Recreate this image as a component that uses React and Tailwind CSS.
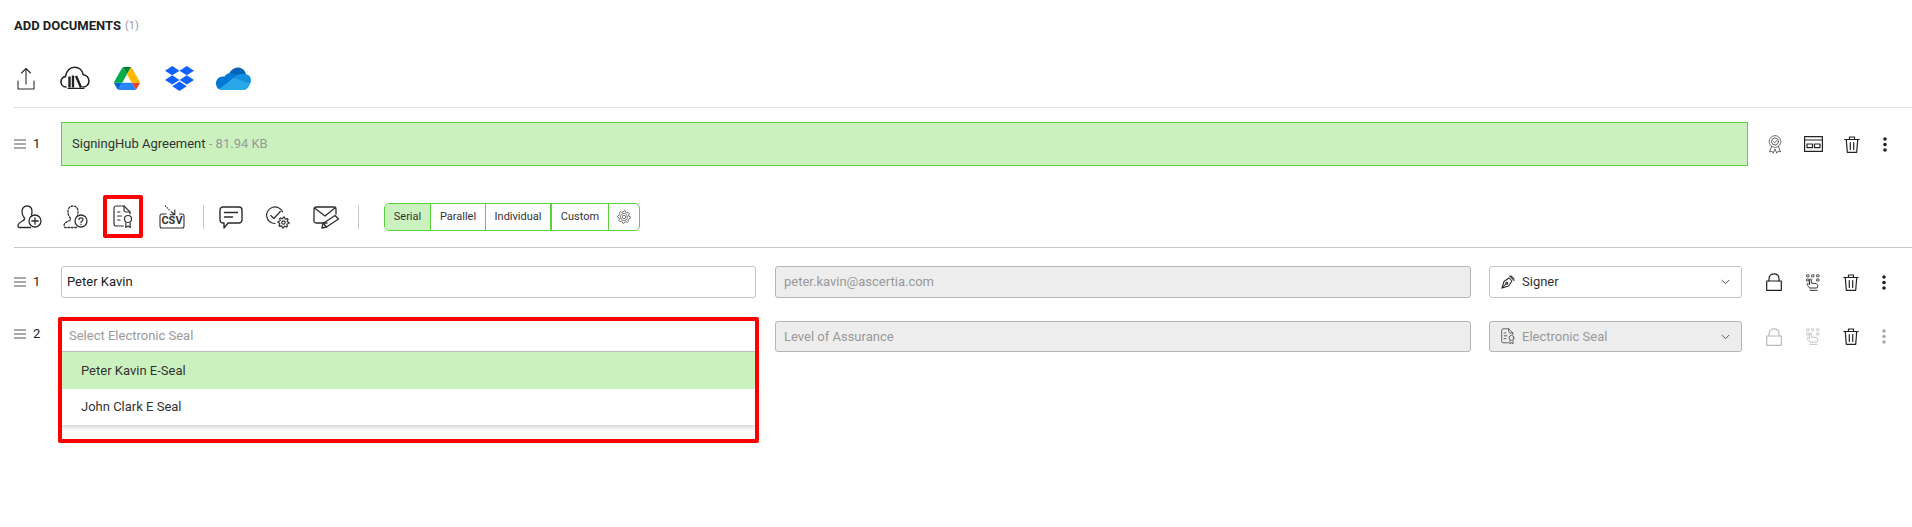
import React from "react";

const S = ({ w = 24, h = 24, vb, className = "", children, sw = 1.3, stroke = "#2b2b2b" }) => (
  <svg width={w} height={h} viewBox={vb || `0 0 ${w} ${h}`} fill="none" stroke={stroke} strokeWidth={sw} strokeLinecap="round" strokeLinejoin="round" className={className}>
    {children}
  </svg>
);

const gearPath = (cx, cy, rOuter, rInner, teeth) => {
  const pts = [];
  const n = teeth * 4;
  for (let i = 0; i < n; i++) {
    const a = (i / n) * Math.PI * 2;
    const r = i % 4 < 2 ? rOuter : rInner;
    pts.push(`${(cx + r * Math.cos(a)).toFixed(2)} ${(cy + r * Math.sin(a)).toFixed(2)}`);
  }
  return "M" + pts.join("L") + "Z";
};

const Handle = () => (
  <svg width="12" height="10" viewBox="0 0 12 10" stroke="#555" strokeWidth="1.1">
    <path d="M0 1h12M0 5h12M0 9h12" />
  </svg>
);

const Upload = () => (
  <S w={18} h={23} sw={1.100}>
    <path d="M9 17V1.500M4.500 6 9 1.500 13.500 6" />
    <path d="M1 14v8h16v-8" />
  </S>
);

const CloudLogo = () => (
  <S w={30} h={24} sw={1.600} stroke="#222">
    <path d="M6 21c-3 0-5-2.300-5-5.300 0-2.600 2-4.800 4.400-5.100C6.300 4.900 10 1.200 14.500 1.200c4.500 0 8 3.200 8.800 7.600 3.200.2 5.700 3 5.700 6.200 0 3.200-2.600 6-6 6" />
    <path d="M9.500 21.500V10.500M13 21.500V9.500" strokeWidth="2.400" strokeLinecap="butt" />
    <path d="M16 10l5 11.500" strokeWidth="2.400" strokeLinecap="butt" />
    <path d="M8 22.400H24" strokeWidth="1.200" />
  </S>
);

const Drive = () => (
  <svg width="26" height="23" viewBox="0 0 87.3 78">
    <path d="m6.6 66.85 3.85 6.65c.8 1.4 1.95 2.5 3.3 3.3l13.75-23.8h-27.5c0 1.55.4 3.1 1.2 4.5z" fill="#0066da" />
    <path d="m43.65 25-13.75-23.8c-1.35.8-2.5 1.9-3.3 3.3l-25.4 44a9.06 9.06 0 0 0 -1.2 4.5h27.5z" fill="#00ac47" />
    <path d="m73.55 76.8c1.35-.8 2.5-1.9 3.3-3.3l1.6-2.75 7.65-13.25c.8-1.4 1.2-2.95 1.2-4.5h-27.502l5.852 11.5z" fill="#ea4335" />
    <path d="m43.65 25 13.75-23.8c-1.35-.8-2.9-1.2-4.5-1.2h-18.5c-1.6 0-3.15.45-4.5 1.2z" fill="#00832d" />
    <path d="m59.8 53h-32.3l-13.75 23.8c1.35.8 2.9 1.2 4.5 1.2h50.8c1.6 0 3.15-.45 4.5-1.2z" fill="#2684fc" />
    <path d="m73.4 26.5-12.7-22c-.8-1.4-1.95-2.5-3.3-3.3l-13.75 23.8 16.15 28h27.45c0-1.55-.4-3.1-1.2-4.5z" fill="#ffba00" />
  </svg>
);

const Dropbox = () => (
  <svg width="29" height="25" viewBox="0 0 29 25" fill="#0f62fe">
    <path d="M7.200 0 14.500 4.700 7.200 9.300 0 4.700z" />
    <path d="M21.800 0 29 4.700 21.800 9.300 14.500 4.700z" />
    <path d="M7.200 9.300 14.500 14 7.200 18.600 0 14z" />
    <path d="M21.800 9.300 29 14 21.800 18.600 14.500 14z" />
    <path d="M7.300 20.200 14.500 15.600 21.700 20.200 14.500 25z" />
  </svg>
);

const OneDrive = () => (
  <svg width="35" height="23" viewBox="0 0 35 23">
    <path d="M13 6.500C15 2.500 18.500.5 21.500.5c4 0 7.500 2.700 8.500 6.800L20 14 13 9z" fill="#0364b8" />
    <path d="M3 22.300C1 21 0 18.800 0 16.500c0-3.800 3-6.900 6.800-6.900.6 0 1 0 1.500.2 1.300-2.500 4-4 7-3.800 2 .2 3.500.9 5 2.200L24 11 12 22.500z" fill="#0078d4" />
    <path d="M30 7.300C33 7.800 35 10.300 35 13.300c0 1.500-.5 2.800-1.300 3.900L24 14l-6-4c2-2 4.500-3 7-3 1.800 0 3.500 0 5 .3z" fill="#1490df" />
    <path d="M6 23c-1 0-2.100-.2-3-.7L18 10.500l15.800 6.700c-1.200 3-3 5.800-6.300 5.800z" fill="#28a8ea" />
  </svg>
);

const UserPlus = () => (
  <S w={25} h={24}>
    <path d="M13.500 22.500H2.500c-1 0-1.500-.7-1.500-1.500 0-3 2.500-4 4.500-5 1.500-.7 2.300-1.700 2-2.800C6 11.500 5 9.500 5 6.500 5 3 7 1 10 1s5 2 5 5.500c0 1-.2 2-.5 3.500" />
    <circle cx="18" cy="16" r="6" />
    <path d="M18 12.800v6.400M14.800 16h6.400" />
  </S>
);

const UserQ = () => (
  <S w={25} h={24} stroke="#333">
    <path d="M13.500 22.500H2.500c-1 0-1.500-.7-1.500-1.500 0-3 2.500-4 4.500-5 1.500-.7 2.300-1.700 2-2.800C6 11.500 5 9.500 5 6.500 5 3 7 1 10 1s5 2 5 5.500c0 1-.2 2-.5 3.500" strokeDasharray="1.800 1.600" />
    <circle cx="18" cy="16" r="6" />
    <path d="M16 14.500c0-1 1-1.700 2-1.700s2 .7 2 1.700c0 1.500-2 1.500-2 3" />
    <path d="M18 19.400v.1" />
  </S>
);

const DocSeal = ({ w = 20, h = 24, stroke = "#333", sw = 1.200 }) => (
  <S w={w} h={h} vb="0 0 20 24" stroke={stroke} sw={sw}>
    <path d="M10.500 21H3c-1 0-2-.8-2-2V3c0-1 1-2 2-2h8l6 6v2" />
    <path d="M11 1v4c0 1 1 2 2 2h4" />
    <path d="M4.500 7h3M4.500 11h4M4.500 15h3" strokeDasharray="2.500 .8" />
    <circle cx="15" cy="14" r="3.500" />
    <path d="M12.800 18v4.500l2.200-1.500 2.200 1.500V18" />
  </S>
);

const Csv = () => (
  <div className="relative w-[26px] h-[24px]">
    <svg width="26" height="24" viewBox="0 0 26 24" fill="none" stroke="#333" strokeWidth="1.100" className="absolute inset-0">
      <path d="M6 .5 11.500 6" strokeDasharray="1.500 1" />
      <path d="M12 6.500 15.500 9.500M15.800 4.500v5.300h-5" />
      <path d="M7.500 9H3c-1.200 0-2 .8-2 2v10c0 1.200.8 2 2 2h20c1.200 0 2-.8 2-2V11c0-1.200-.8-2-2-2h-3" />
    </svg>
    <span className="absolute left-0 right-0 top-[10px] text-center text-[11px] leading-[12px] font-bold text-[#333]">CSV</span>
  </div>
);

const Comment = () => (
  <S w={24} h={23} sw={1.400}>
    <path d="M4 1h16c1.500 0 3 1.200 3 3v10c0 1.700-1.500 3-3 3H9l-4 5V17H4c-1.500 0-3-1.300-3-3V4c0-1.800 1.500-3 3-3z" />
    <path d="M5.500 6.500h13M5.500 11h8" />
  </S>
);

const CheckGear = () => (
  <S w={24} h={23} sw={1.150}>
    <path d="M9 17.500A8.300 8.300 0 1 1 16.500 5.800" />
    <path d="M4.800 9.500l3 3 6.500-7" />
    <circle cx="17.500" cy="16.500" r="1.700" />
    <path d={gearPath(17.500, 16.500, 5.500, 4, 8)} />
  </S>
);

const MailPen = () => (
  <S w={27} h={23} sw={1.300}>
    <path d="M14 17H3c-1 0-2-1-2-2V3c0-1 1-2 2-2h18c1 0 2 1 2 2v5" />
    <path d="M1.500 2 12 10l10-8" />
    <path d="M9 22l1-4.500L22 9.500l3.500 3.500L13.500 21z" />
    <path d="M10.500 17.500l3 3.500" />
  </S>
);

const GearSmall = () => (
  <S w={14} h={14} sw={0.8} stroke="#555">
    <circle cx="7" cy="7" r="1.800" />
    <circle cx="7" cy="7" r="3.500" strokeDasharray="1 .8" />
    <path d={gearPath(7, 7, 6.300, 5, 8)} />
  </S>
);

const Award = () => (
  <S w={14} h={19} sw={0.9} stroke="#555" vb="0 0 14 19">
    <circle cx="7" cy="6.500" r="5.800" strokeDasharray="2 .7" />
    <circle cx="7" cy="6.500" r="3.500" />
    <path d="M5.500 6.500l1.200 1.200 2-2" />
    <path d="M3.500 11.500 1.500 17l2.500-.8 1.200 2L7 14l1.800 4.200 1.200-2 2.500.8-2-5.500" />
  </S>
);

const Layout = () => (
  <S w={19} h={16} sw={1.200} stroke="#222">
    <rect x=".6" y=".6" width="17.800" height="14.800" />
    <path d="M.6 4h17.800" />
    <rect x="3" y="8" width="5.500" height="3.600" />
    <rect x="10.500" y="8" width="5.500" height="3.600" />
  </S>
);

const Trash = () => (
  <S w={16} h={17} sw={1.200} stroke="#222">
    <path d="M.8 3.500h14.400M5.500 3.200V1h5v2.200" />
    <path d="M2.300 4l1 12.300h9.400l1-12.300" />
    <path d="M6.300 6.500v7M9.700 6.500v7" />
  </S>
);

const Dots = ({ faded }) => (
  <svg width="4" height="15" viewBox="0 0 4 15" fill={faded ? "#aaa" : "#222"}>
    <circle cx="2" cy="2" r="1.800" />
    <circle cx="2" cy="7.500" r="1.800" />
    <circle cx="2" cy="13" r="1.800" />
  </svg>
);

const Lock = ({ faded }) => (
  <S w={16} h={18} sw={1.200} stroke={faded ? "#bbb" : "#222"}>
    <rect x=".7" y="8" width="14.600" height="9.300" />
    <path d="M3 8V6C3 2.500 5.200.8 8 .8s5 1.700 5 5.200v2" />
  </S>
);

const HandDots = ({ faded }) => {
  const c = faded ? "#c4c4c4" : "#333";
  return (
    <S w={14} h={17} sw={1} stroke={c}>
      <path d="M1 .8h2v2H1zM6 .8h2v2H6zM11 .8h2v2h-2zM1 5h2v2H1zM6 5h0M11 5h2v2h-2z" strokeWidth=".8" />
      <path d="M3 13.500c-1-1.500-2.200-3-1.800-3.800.4-.6 1.300-.2 2.300 1V6c0-1.200 1.800-1.200 1.800 0v3l5 .7c1 .2 1.800 1 1.500 2l-1 2.300H4z" />
      <path d="M4 16.300h7" />
    </S>
  );
};

const PenNib = () => (
  <S w={14} h={14} sw={1.050}>
    <path d="M1 13l2-6.500 5-3.500L11 6l-3.500 5z" />
    <path d="M1 13l4-4" />
    <circle cx="5.800" cy="8.200" r="1" />
    <path d="M8.500 1l4.500 4.500M10 .8l3.200 3.200" />
  </S>
);

const Chevron = () => (
  <svg width="9" height="6" viewBox="0 0 9 6" fill="none" stroke="#555" strokeWidth="1">
    <path d="M.8 1 4.500 4.700 8.200 1" />
  </svg>
);

const Sep = () => <div className="w-px h-[24px] bg-[#c8c8c8]" />;

const Num = ({ n }) => (
  <div className="w-[47px] shrink-0 flex items-center gap-[7px] text-[13px] text-[#222]">
    <Handle />
    <span>{n}</span>
  </div>
);

const Cell = ({ w, children }) => <div className={`${w} flex justify-center items-center`}>{children}</div>;

const Actions = ({ faded }) => (
  <div className="flex items-center ml-[13px]">
    <Cell w="w-[38px]"><Lock faded={faded} /></Cell>
    <Cell w="w-[39px]"><HandDots faded={faded} /></Cell>
    <Cell w="w-[38px]"><Trash /></Cell>
    <Cell w="w-[28px]"><Dots faded={faded} /></Cell>
  </div>
);

const seg = "h-full flex items-center justify-center text-[11px] text-[#333] border-[#5ad23c]";

export default function App() {
  return (
    <div className="w-[1912px] h-[527px] bg-white overflow-hidden font-['Roboto',sans-serif] text-[13px] text-[#333]">
      <div className="pl-[14px] pt-[18px] h-[37px] flex items-start">
        <span className="text-[13px] leading-[15px] font-bold text-[#222] uppercase">Add Documents</span>
        <span className="ml-[4px] text-[11px] leading-[15px] text-[#999]">(1)</span>
      </div>
      <div className="ml-[14px] h-[71px] border-b border-[#dedede] flex items-center pt-[12px]">
        <div className="ml-[3px]"><Upload /></div>
        <div className="ml-[25px]"><CloudLogo /></div>
        <div className="ml-[24px]"><Drive /></div>
        <div className="ml-[25px]"><Dropbox /></div>
        <div className="ml-[22px]"><OneDrive /></div>
      </div>
      <div className="pl-[14px] mt-[14px] flex items-center h-[44px]">
        <Num n="1" />
        <div className="w-[1687px] h-full bg-[#cbf1bf] border border-[#5ad23c] flex items-center pl-[10px] text-[13px] text-[#333]">
          SigningHub Agreement<span className="text-[#999]">&nbsp;- 81.94 KB</span>
        </div>
        <div className="flex items-center ml-[8px]">
          <Cell w="w-[38px]"><Award /></Cell>
          <Cell w="w-[39px]"><Layout /></Cell>
          <Cell w="w-[38px]"><Trash /></Cell>
          <Cell w="w-[28px]"><Dots /></Cell>
        </div>
      </div>
      <div className="ml-[14px] mt-[30px] h-[52px] pb-[9px] border-b border-[#c8c8c8] flex items-center">
        <div className="ml-[3px]"><UserPlus /></div>
        <div className="ml-[21px]"><UserQ /></div>
        <div className="relative ml-[25px]">
          <DocSeal />
          <div className="absolute -left-[10px] -top-[10px] w-[40px] h-[43px] border-[4px] border-[#ff0000] rounded-[2px]" />
        </div>
        <div className="ml-[26px]"><Csv /></div>
        <div className="ml-[18px]"><Sep /></div>
        <div className="ml-[15px]"><Comment /></div>
        <div className="ml-[23px]"><CheckGear /></div>
        <div className="ml-[23px]"><MailPen /></div>
        <div className="ml-[18px]"><Sep /></div>
        <div className="ml-[25px] h-[28px] flex border border-[#5ad23c] rounded-[5px] overflow-hidden w-[256px]">
          <div className={`${seg} border-r w-[46px] bg-[#cbf1bf]`}>Serial</div>
          <div className={`${seg} border-r w-[55px]`}>Parallel</div>
          <div className={`${seg} border-r-2 w-[66px]`}>Individual</div>
          <div className={`${seg} border-r w-[57px]`}>Custom</div>
          <div className="flex-1 flex items-center justify-center"><GearSmall /></div>
        </div>
      </div>
      <div className="pl-[14px] mt-[18px] flex items-center h-[32px]">
        <Num n="1" />
        <div className="w-[695px] h-full border border-[#c4c4c4] rounded-[3px] flex items-center pl-[5px] text-[#222]">Peter Kavin</div>
        <div className="ml-[19px] w-[696px] h-full border border-[#b5b5b5] bg-[#ededed] rounded-[3px] flex items-center pl-[8px] text-[#999]">peter.kavin@ascertia.com</div>
        <div className="ml-[18px] w-[253px] h-full border border-[#c4c4c4] rounded-[3px] flex items-center pl-[11px] text-[#333]">
          <PenNib />
          <span className="ml-[7px]">Signer</span>
          <span className="ml-auto mr-[11px]"><Chevron /></span>
        </div>
        <Actions />
      </div>
      <div className="pl-[14px] mt-[23px] flex items-start h-[31px]">
        <div className="h-[25px] flex items-center"><Num n="2" /></div>
        <div className="relative w-[695px] h-full">
          <div className="h-full border-b border-[#c4c4c4] flex items-center pl-[8px] text-[#999]">Select Electronic Seal</div>
          <div className="absolute left-0 right-0 top-[31px] h-[73px] bg-white shadow-[0_2px_5px_rgba(0,0,0,0.2)] text-[#333]">
            <div className="h-[37px] bg-[#cbf1bf] flex items-center pl-[20px]">Peter Kavin E-Seal</div>
            <div className="h-[36px] flex items-center pl-[20px]">John Clark E Seal</div>
          </div>
          <div className="absolute -left-[3px] -right-[3px] -top-[4px] h-[126px] border-[4px] border-[#ff0000] rounded-[2px]" />
        </div>
        <div className="ml-[19px] w-[696px] h-full border border-[#b5b5b5] bg-[#ededed] rounded-[3px] flex items-center pl-[8px] text-[#999]">Level of Assurance</div>
        <div className="ml-[18px] w-[253px] h-full border border-[#b5b5b5] bg-[#ededed] rounded-[3px] flex items-center pl-[11px] text-[#999]">
          <DocSeal w={14} h={17} stroke="#555" sw={1.300} />
          <span className="ml-[7px]">Electronic Seal</span>
          <span className="ml-auto mr-[11px]"><Chevron /></span>
        </div>
        <div className="h-full flex items-center"><Actions faded /></div>
      </div>
    </div>
  );
}
